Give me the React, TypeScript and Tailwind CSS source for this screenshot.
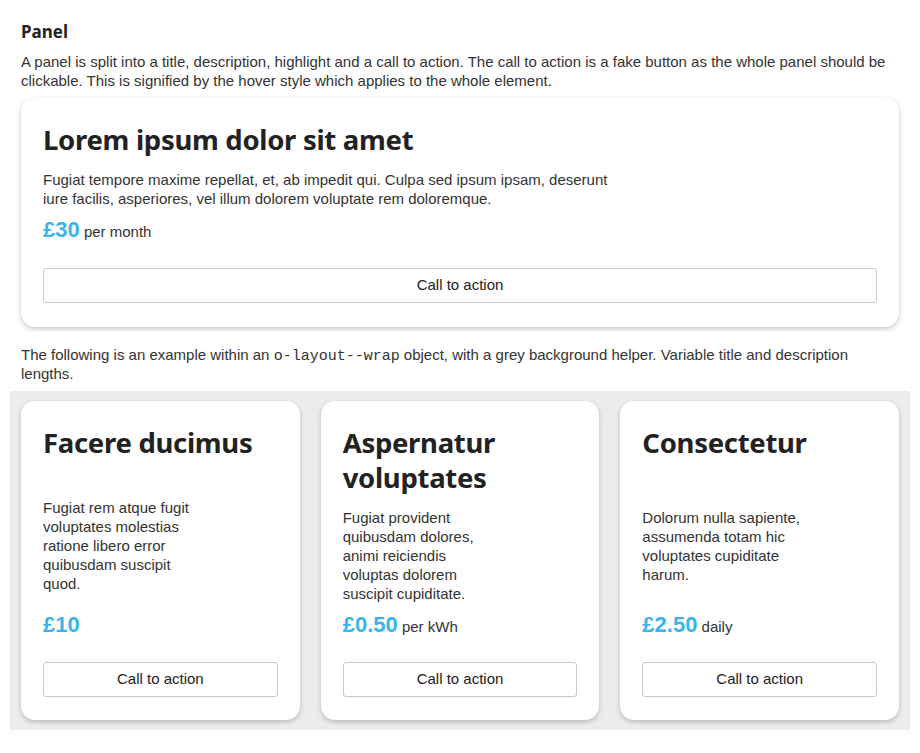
import React from 'react';

interface PanelData {
    title: string;
    description: string;
    price: string;
    unit?: string;
    gap: string;
}

const cards: PanelData[] = [
    {
        title: 'Facere ducimus',
        description: 'Fugiat rem atque fugit voluptates molestias ratione libero error quibusdam suscipit quod.',
        price: '£10',
        gap: 'mt-[38px]',
    },
    {
        title: 'Aspernatur voluptates',
        description: 'Fugiat provident quibusdam dolores, animi reiciendis voluptas dolorem suscipit cupiditate.',
        price: '£0.50',
        unit: 'per kWh',
        gap: 'mt-[13px]',
    },
    {
        title: 'Consectetur',
        description: 'Dolorum nulla sapiente, assumenda totam hic voluptates cupiditate harum.',
        price: '£2.50',
        unit: 'daily',
        gap: 'mt-[48px]',
    },
];

const titleFont = { fontFamily: '"Noto Sans", "DejaVu Sans", sans-serif' };

interface PanelProps {
    data: PanelData;
    descWidth: string;
    wide?: boolean;
}

const Panel: React.FC<PanelProps> = ({ data, descWidth, wide }) => {
    return (
        <a href="#" className={`flex flex-col h-full bg-white rounded-[14px] shadow-[0_2px_5px_rgba(0,0,0,0.22)] pt-[24px] px-[22px] text-[#333] no-underline ${wide ? 'pb-[24px]' : 'pb-[23px]'}`}>
            <h2 style={titleFont} className="text-[27.5px] leading-[35px] font-bold text-[#222] tracking-[-0.3px]">
                {data.title}
            </h2>
            <p className={`${data.gap} ${descWidth} text-[15px] leading-[19px]`}>
                {data.description}
            </p>
            <div className="mt-auto pt-[8px] leading-[27px]">
                <span className="text-[22px] font-bold text-[#3bb4e9]">{data.price}</span>
                {data.unit && <span className="text-[15px] text-[#333]"> {data.unit}</span>}
            </div>
            <div className={`h-[35px] flex items-center justify-center border border-[#c9c9c9] rounded-[3px] text-[15px] text-[#222] ${wide ? 'mt-[23px]' : 'mt-[22px]'}`}>
                Call to action
            </div>
        </a>
    );
};

export default function App() {
    return (
        <div className="bg-white min-h-screen px-[21px] pt-[20px] pb-[20px] text-[#333]" style={{ fontFamily: '"Liberation Sans", Arial, sans-serif' }}>
            <h1 style={titleFont} className="text-[17px] leading-[24px] font-bold text-[#222]">
                Panel
            </h1>
            <p className="mt-[8px] max-w-[872px] text-[15px] leading-[19px]">
                A panel is split into a title, description, highlight and a call to action. The call to action is a fake button as the whole panel should be clickable. This is signified by the hover style which applies to the whole element.
            </p>
            <div className="mt-[8px]">
                <Panel
                    data={{
                        title: 'Lorem ipsum dolor sit amet',
                        description: 'Fugiat tempore maxime repellat, et, ab impedit qui. Culpa sed ipsum ipsam, deserunt iure facilis, asperiores, vel illum dolorem voluptate rem doloremque.',
                        price: '£30',
                        unit: 'per month',
                        gap: 'mt-[13px]',
                    }}
                    descWidth="max-w-[585px]"
                    wide
                />
            </div>
            <p className="mt-[18px] text-[15px] leading-[19px]">
                The following is an example within an{' '}
                <code className="text-[15px] leading-none" style={{ fontFamily: '"Liberation Mono", "Courier New", monospace' }}>o-layout--wrap</code>{' '}
                object, with a grey background helper. Variable title and description lengths.
            </p>
            <div className="mt-[8px] -mx-[11px] px-[11px] py-[10px] bg-[#ececec] grid grid-cols-3 gap-[21px]">
                {cards.map((card) => (
                    <Panel key={card.title} data={card} descWidth="max-w-[160px]" />
                ))}
            </div>
        </div>
    );
}
